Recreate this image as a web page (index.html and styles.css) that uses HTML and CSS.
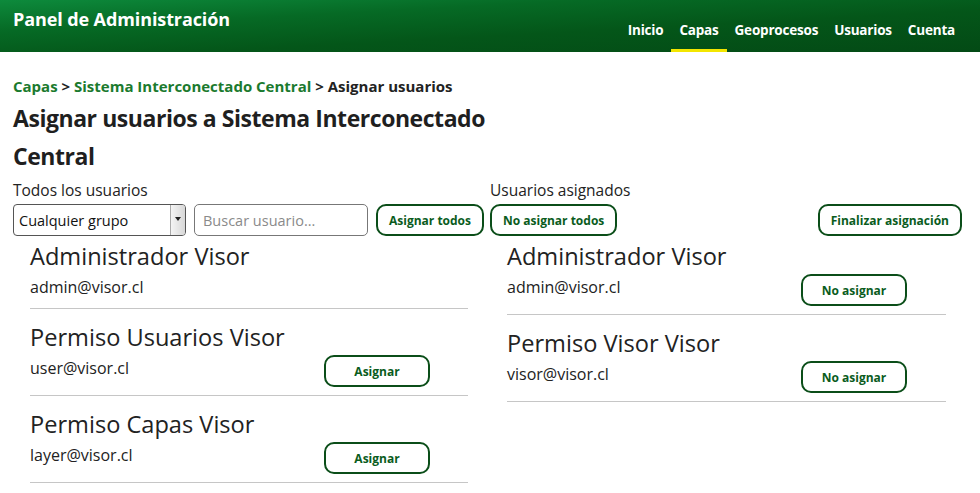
FILE: index.html
```html
<!DOCTYPE html>
<html lang="es">
<head>
<meta charset="utf-8">
<title>Panel de Administración</title>
<link rel="stylesheet" href="styles.css">
</head>
<body>
<header class="topbar">
  <div class="brand">Panel de Administración</div>
  <nav class="nav">
    <a href="#" class="nav-link">Inicio</a>
    <a href="#" class="nav-link active">Capas</a>
    <a href="#" class="nav-link">Geoprocesos</a>
    <a href="#" class="nav-link">Usuarios</a>
    <a href="#" class="nav-link">Cuenta</a>
  </nav>
</header>
<main class="content">
  <div class="breadcrumb"><a href="#">Capas</a> &gt; <a href="#">Sistema Interconectado Central</a> &gt; Asignar usuarios</div>
  <h1 class="title">Asignar usuarios a Sistema Interconectado Central</h1>
  <div class="columns">
    <section class="col">
      <div class="col-label">Todos los usuarios</div>
      <div class="controls">
        <label class="select-wrap">
          <select class="select"><option>Cualquier grupo</option></select>
          <span class="select-arrow"></span>
        </label>
        <input class="search" type="text" placeholder="Buscar usuario...">
        <button class="btn">Asignar todos</button>
      </div>
      <ul class="list list-left">
        <li class="item">
          <div class="name">Administrador Visor</div>
          <div class="row"><span class="email">admin@visor.cl</span></div>
        </li>
        <li class="item">
          <div class="name">Permiso Usuarios Visor</div>
          <div class="row"><span class="email">user@visor.cl</span><button class="btn btn-item">Asignar</button></div>
        </li>
        <li class="item">
          <div class="name">Permiso Capas Visor</div>
          <div class="row"><span class="email">layer@visor.cl</span><button class="btn btn-item">Asignar</button></div>
        </li>
      </ul>
    </section>
    <section class="col">
      <div class="col-label">Usuarios asignados</div>
      <div class="controls controls-right">
        <button class="btn">No asignar todos</button>
        <button class="btn">Finalizar asignación</button>
      </div>
      <ul class="list list-right">
        <li class="item">
          <div class="name">Administrador Visor</div>
          <div class="row"><span class="email">admin@visor.cl</span><button class="btn btn-item">No asignar</button></div>
        </li>
        <li class="item">
          <div class="name">Permiso Visor Visor</div>
          <div class="row"><span class="email">visor@visor.cl</span><button class="btn btn-item">No asignar</button></div>
        </li>
      </ul>
    </section>
  </div>
</main>
</body>
</html>
```

FILE: styles.css
```css
* { box-sizing: border-box; }
html, body { margin: 0; padding: 0; background: #fff; }
body {
  font-family: "Open Sans", Lato, sans-serif;
  color: #222;
  overflow: hidden;
}

.topbar {
  height: 52px;
  display: flex;
  justify-content: space-between;
  align-items: stretch;
  padding-left: 13px;
  background: linear-gradient(to bottom right, #0d8a3c 0%, #066a25 30%, #045619 60%, #034a15 100%);
}
.brand {
  color: #fff;
  font-weight: 700;
  font-size: 18px;
  line-height: 24px;
  padding-top: 7px;
  letter-spacing: -0.1px;
}
.nav {
  display: flex;
  padding-right: 17px;
}
.nav-link {
  color: #fff;
  text-decoration: none;
  font-weight: 700;
  font-size: 13.5px;
  line-height: 18px;
  padding: 21px 8px 0;
  letter-spacing: -0.2px;
  border-bottom: 3px solid transparent;
}
.nav-link.active { border-bottom-color: #f3e600; }

.content {
  padding: 24px 18px 0 13px;
}
.breadcrumb {
  font-weight: 700;
  font-size: 15px;
  line-height: 20px;
  color: #222;
}
.breadcrumb a { color: #1b7a2e; text-decoration: none; }
.title {
  margin: 3px 0 0;
  width: 480px;
  font-size: 23px;
  font-weight: 700;
  line-height: 38px;
  letter-spacing: -0.45px;
  color: #1f1f1f;
}

.columns {
  display: grid;
  grid-template-columns: 473px 472px;
  column-gap: 4px;
  margin-top: 5px;
}
.col-label {
  font-size: 15.5px;
  line-height: 20px;
  color: #222;
}
.controls {
  display: flex;
  gap: 8px;
  margin-top: 4px;
  height: 32px;
}
.controls-right { justify-content: space-between; }

.select-wrap {
  position: relative;
  display: block;
  width: 173px;
  height: 32px;
}
.select {
  appearance: none;
  -webkit-appearance: none;
  width: 100%;
  height: 100%;
  border: 1px solid #555;
  border-radius: 4px;
  background: #fff;
  font-family: "Open Sans", sans-serif;
  font-size: 14.5px;
  color: #111;
  padding: 0 20px 0 5px;
}
.select-arrow {
  position: absolute;
  top: 1px;
  right: 1px;
  bottom: 1px;
  width: 15px;
  border-left: 1px solid #aaa;
  border-radius: 0 3px 3px 0;
  background: linear-gradient(to right, #f4f4f4, #d8d8d8);
  pointer-events: none;
}
.select-arrow::after {
  content: "";
  position: absolute;
  left: 4px;
  top: 12px;
  border-left: 3px solid transparent;
  border-right: 3px solid transparent;
  border-top: 4px solid #222;
}
.search {
  width: 174px;
  height: 32px;
  border: 1px solid #777;
  border-radius: 5px;
  padding: 0 8px;
  font-family: "Open Sans", sans-serif;
  font-size: 14.5px;
  color: #111;
}
.search::placeholder { color: #8a8a8a; }

.btn {
  height: 32px;
  padding: 0 11px;
  border: 2px solid #0b4e19;
  border-radius: 10px;
  background: #fff;
  color: #0a5c1d;
  font-family: "Open Sans", sans-serif;
  font-weight: 700;
  font-size: 12px;
  cursor: pointer;
}
.btn-item { width: 106px; flex: none; }

.list {
  list-style: none;
  margin: 0;
  padding: 0;
}
.list-left { margin: 0 18px 0 17px; }
.list-right { margin: 0 16px 0 17px; }
.item {
  padding: 13px 0 8px;
  border-bottom: 1px solid #c6c6c6;
}
.item:first-child { padding-top: 5px; }
.name {
  font-size: 23.6px;
  line-height: 30px;
  color: #222;
  margin-bottom: 3px;
}
.row {
  display: flex;
  justify-content: space-between;
  align-items: flex-start;
  padding-right: 38px;
}
.list-right .row { padding-right: 39px; }
.email {
  font-size: 16px;
  line-height: 26px;
  color: #222;
}
```
